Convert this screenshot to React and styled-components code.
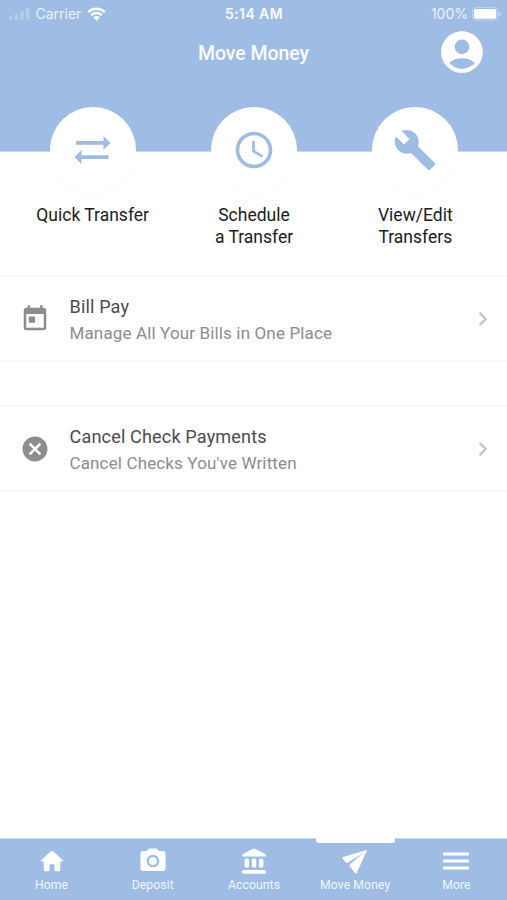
import React from "react";
import styled, { createGlobalStyle } from "styled-components";
import {
  MdAccountCircle,
  MdBuild,
  MdCancel,
  MdPhotoCamera,
  MdSchedule,
  MdToday,
} from "react-icons/md";

const blue = "#9fbde4";

const GlobalStyle = createGlobalStyle`
  * {
    box-sizing: border-box;
  }
  body {
    margin: 0;
    background: #fff;
    font-family: Roboto, "Liberation Sans", sans-serif;
  }
  svg {
    display: block;
    flex: none;
  }
`;

const Screen = styled.div`
  width: 507px;
  height: 900px;
  display: flex;
  flex-direction: column;
  overflow: hidden;
`;

const Header = styled.header`
  height: 152px;
  flex: none;
  background: ${blue};
  border-bottom: 1px solid #c9daf0;
`;

const StatusBar = styled.div`
  height: 27px;
  padding: 0 6px 0 9px;
  display: grid;
  grid-template-columns: 1fr auto 1fr;
  align-items: center;
  color: #eaf2fc;
  font-family: Inter, sans-serif;
  font-size: 14px;
`;

const StatusGroup = styled.div`
  display: flex;
  align-items: center;
  justify-content: ${(p) => (p.$end ? "flex-end" : "flex-start")};
  gap: ${(p) => (p.$end ? "4px" : "5.5px")};
`;

const Time = styled.div`
  color: #f7faff;
  font-weight: 600;
  font-size: 14px;
  letter-spacing: 0.4px;
  padding-right: 2px;
`;

const TitleBar = styled.div`
  height: 50px;
  display: grid;
  grid-template-columns: 1fr auto 1fr;
  align-items: center;
  padding-right: 20px;
  padding-left: 20px;
`;

const Title = styled.h1`
  grid-column: 2;
  margin: 2px 0 0;
  color: #f8fbff;
  font-size: 19.5px;
  font-weight: 500;
  letter-spacing: -0.05px;
`;

const ProfileButton = styled.a`
  justify-self: end;
  color: #fff;
`;

const Actions = styled.div`
  margin-top: -45px;
  padding: 0 11px 0 12px;
  height: 168px;
  flex: none;
  display: grid;
  grid-template-columns: repeat(3, 1fr);
`;

const Action = styled.div`
  display: flex;
  flex-direction: column;
  align-items: center;
`;

const ActionCircle = styled.div`
  width: 86px;
  height: 86px;
  display: flex;
  align-items: center;
  justify-content: center;
  border-radius: 50%;
  background: #fff;
  color: ${blue};
  box-shadow: 0 1px 3px rgba(0, 0, 0, 0.025);
`;

const ActionLabel = styled.div`
  margin-top: 11px;
  color: #1c1c1c;
  font-size: 17.5px;
  line-height: 22px;
  text-align: center;
  white-space: pre-line;
`;

const List = styled.div`
  flex: 1;
  display: flex;
  flex-direction: column;
  gap: 43px;
`;

const Row = styled.div`
  height: 87px;
  padding: 0 16px 0 20px;
  display: flex;
  align-items: center;
  border-top: 2px solid #f7f7f7;
  border-bottom: 2px solid #f7f7f7;
  color: #8d8d8d;
`;

const RowText = styled.div`
  flex: 1;
  padding-top: 2px;
  padding-left: 19.5px;
  letter-spacing: 0.14px;
`;

const RowTitle = styled.div`
  color: #4c4c4c;
  font-size: 18.1px;
  line-height: 26px;
`;

const RowDetail = styled.div`
  color: #8d8d8d;
  font-size: 17px;
  line-height: 26px;
`;

const TabBar = styled.nav`
  height: 62px;
  flex: none;
  padding-left: 1px;
  display: grid;
  grid-template-columns: repeat(5, 1fr);
  background: ${blue};
  border-top: 1px solid #c9daf0;
`;

const Tab = styled.a`
  display: flex;
  flex-direction: column;
  align-items: center;
  color: #fff;
`;

const TabMarker = styled.div`
  width: 79px;
  height: 5px;
  margin-top: -1px;
  border-radius: 0 0 3px 3px;
  background: ${(p) => (p.$active ? "#fff" : "transparent")};
`;

const TabIcon = styled.div`
  height: 36px;
  display: flex;
  align-items: center;
`;

const TabLabel = styled.div`
  color: #f1f6fd;
  font-size: 12.2px;
  line-height: 12px;
  letter-spacing: 0.1px;
`;

const SignalIcon = () => (
  <svg width="21" height="14" viewBox="0 0 21 14" fill="#fff" opacity="0.22">
    <rect x="0" y="9" width="3.6" height="4" rx="1" />
    <rect x="5.6" y="7" width="3.6" height="6" rx="1" />
    <rect x="11.2" y="4" width="3.6" height="9" rx="1" />
    <rect x="16.8" y="1" width="3.6" height="12" rx="1" />
  </svg>
);

const WifiIcon = () => (
  <svg width="19" height="14" viewBox="0 0 19 14" fill="none">
    <path
      d="M1.2 5.1a12 12 0 0 1 16.6 0M4.2 8.1a7.8 7.8 0 0 1 10.6 0"
      stroke="#fff"
      strokeWidth="2.3"
    />
    <path d="M6.3 10.4a4.8 4.8 0 0 1 6.4 0L9.5 13.7z" fill="#fff" />
  </svg>
);

const BatteryIcon = () => (
  <svg width="29" height="14" viewBox="0 0 29 14">
    <rect
      x="0.6"
      y="0.6"
      width="25"
      height="12.6"
      rx="3.4"
      fill="none"
      stroke="#fff"
      strokeOpacity="0.35"
    />
    <rect x="2" y="2" width="22.2" height="9.8" rx="2" fill="#fff" />
    <path d="M27 4.7v4.4q1.6-.7 1.6-2.2T27 4.7z" fill="#fff" opacity="0.5" />
  </svg>
);

const TransferIcon = () => (
  <svg width="37" height="30" viewBox="0 0 37 30" fill="currentColor">
    <path d="M2 5.9h27.5V1l7 6.9-7 6.9V9.7H2z" />
    <path d="M34.5 20.3H7.5V15L.4 22.1l7.1 7v-5h27z" />
  </svg>
);

const ChevronIcon = () => (
  <svg width="16" height="18" viewBox="0 0 16 18" fill="none">
    <path d="M4.5 2.7l6.3 6.3-6.3 6.3" stroke="#c3c3c3" strokeWidth="2.2" />
  </svg>
);

const HomeIcon = () => (
  <svg width="24" height="22" viewBox="0 0 24 22" fill="currentColor">
    <path d="M12 .8q.5 0 1 .4L23 10.4q.7.9-.4.9h-2.3v8.6q0 1.3-1.3 1.3h-3.3q-1.3 0-1.3-1.3v-5q0-.7-.7-.7h-3.4q-.7 0-.7.7v5q0 1.3-1.3 1.3H5q-1.3 0-1.3-1.3v-8.6H1.4q-1.1 0-.4-.9L11 1.2q.5-.4 1-.4z" />
  </svg>
);

const BankIcon = () => (
  <svg width="26" height="27" viewBox="0 0 26 27" fill="currentColor">
    <path d="M11.7.9q1.3-.6 2.6 0l9.8 5.2q.8.4.8 1.2v.4q0 .9-.9.9H2q-.9 0-.9-.9v-.4q0-.8.8-1.2z" />
    <rect x="3.6" y="10.6" width="4.4" height="9" rx="1.7" />
    <rect x="10.8" y="10.6" width="4.4" height="9" rx="1.7" />
    <rect x="18" y="10.6" width="4.4" height="9" rx="1.7" />
    <rect x="1.1" y="21.9" width="23.8" height="3.9" rx="1.6" />
  </svg>
);

const PlaneIcon = () => (
  <svg width="26" height="25" viewBox="0 0 26 25" fill="currentColor">
    <path d="M25.2.7L1.2 8q-1.3.6-.5 1.7l3.3 3.8q.7.7 1.6.2L20.5 4.4z" />
    <path d="M25.2.7L8 15.2q-.9.8-.3 1.7l4.9 6.8q1.2 1.3 2.2 0z" />
  </svg>
);

const MenuIcon = () => (
  <svg width="26" height="20" viewBox="0 0 26 20" fill="currentColor">
    <rect y="1.4" width="26" height="3" rx="1.2" />
    <rect y="8.5" width="26" height="3" rx="1.2" />
    <rect y="15.6" width="26" height="3" rx="1.2" />
  </svg>
);

const actions = [
  { label: "Quick Transfer", icon: <TransferIcon /> },
  { label: "Schedule\na Transfer", icon: <MdSchedule size={44} /> },
  { label: "View/Edit\nTransfers", icon: <MdBuild size={44} /> },
];

const rows = [
  {
    title: "Bill Pay",
    detail: "Manage All Your Bills in One Place",
    icon: <MdToday size={30} />,
  },
  {
    title: "Cancel Check Payments",
    detail: "Cancel Checks You've Written",
    icon: <MdCancel size={30} />,
  },
];

const tabs = [
  { label: "Home", icon: <HomeIcon /> },
  { label: "Deposit", icon: <MdPhotoCamera size={30} /> },
  { label: "Accounts", icon: <BankIcon /> },
  { label: "Move Money", icon: <PlaneIcon />, active: true },
  { label: "More", icon: <MenuIcon /> },
];

const App = () => {
  return (
    <Screen>
      <GlobalStyle />
      <Header>
        <StatusBar>
          <StatusGroup>
            <SignalIcon />
            Carrier
            <WifiIcon />
          </StatusGroup>
          <Time>5:14 AM</Time>
          <StatusGroup $end>
            100%
            <BatteryIcon />
          </StatusGroup>
        </StatusBar>
        <TitleBar>
          <Title>Move Money</Title>
          <ProfileButton>
            <MdAccountCircle size={50} />
          </ProfileButton>
        </TitleBar>
      </Header>
      <Actions>
        {actions.map((item) => (
          <Action key={item.label}>
            <ActionCircle>{item.icon}</ActionCircle>
            <ActionLabel>{item.label}</ActionLabel>
          </Action>
        ))}
      </Actions>
      <List>
        {rows.map((item) => (
          <Row key={item.title}>
            {item.icon}
            <RowText>
              <RowTitle>{item.title}</RowTitle>
              <RowDetail>{item.detail}</RowDetail>
            </RowText>
            <ChevronIcon />
          </Row>
        ))}
      </List>
      <TabBar>
        {tabs.map((item) => (
          <Tab key={item.label}>
            <TabMarker $active={item.active} />
            <TabIcon>{item.icon}</TabIcon>
            <TabLabel>{item.label}</TabLabel>
          </Tab>
        ))}
      </TabBar>
    </Screen>
  );
};

export default App;
